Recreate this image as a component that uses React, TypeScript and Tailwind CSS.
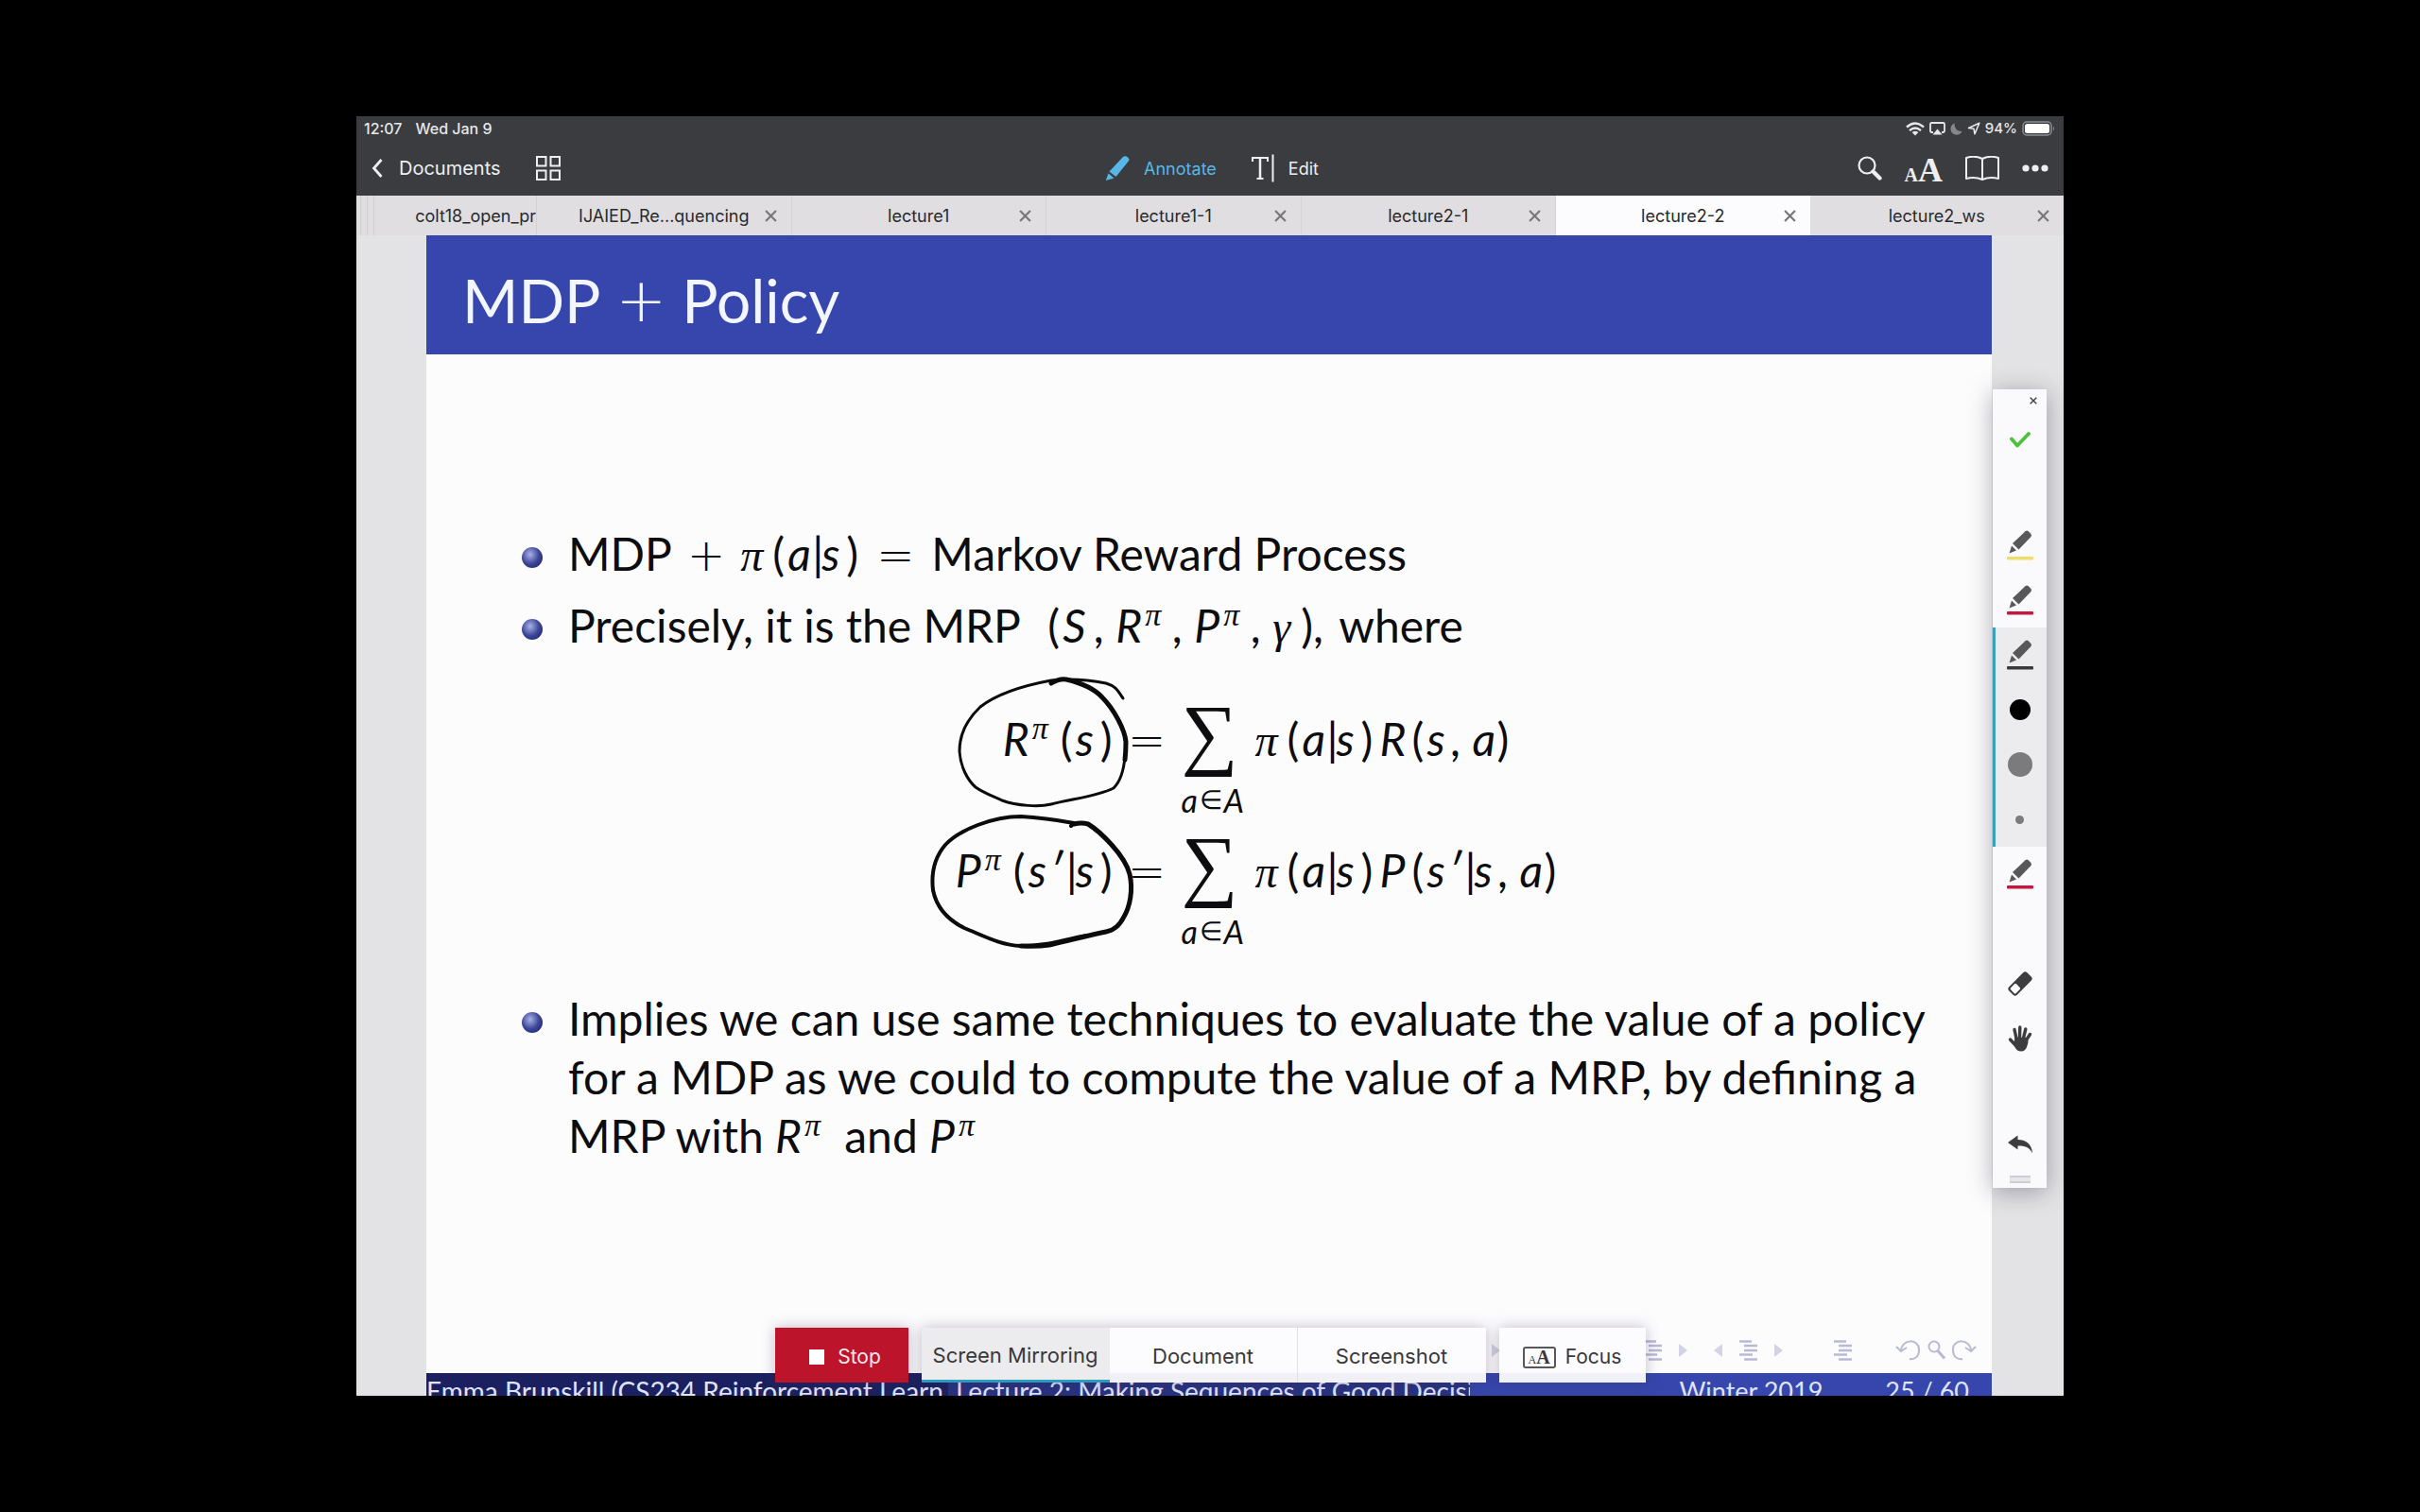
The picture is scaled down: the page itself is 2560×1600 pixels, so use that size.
import React from "react";

type Kids = { children?: React.ReactNode };

const TABS = [
  { name: "IJAIED_Re...quencing", active: false },
  { name: "lecture1", active: false },
  { name: "lecture1-1", active: false },
  { name: "lecture2-1", active: false },
  { name: "lecture2-2", active: true },
  { name: "lecture2_ws", active: false },
];

function Cross({ className }: { className: string }) {
  return (
    <svg viewBox="0 0 12 12" className={className} fill="none" stroke="currentColor" strokeWidth="2" aria-hidden="true">
      <path d="M1 1l10 10M11 1L1 11" />
    </svg>
  );
}

/* ---------- status bar and toolbar ---------- */

function StatusBar() {
  return (
    <div className="flex h-[26px] items-center justify-between pl-2 pr-2 text-[16px] font-medium text-[#e6e7e9]">
      <div className="flex gap-[14px]">
        <span>12:07</span>
        <span>Wed Jan 9</span>
      </div>
      <div className="flex items-center gap-[5px]">
        <svg viewBox="0 0 20 14" className="h-[15px] w-[20px]" aria-label="Wi-Fi" fill="none" stroke="currentColor" strokeWidth="2.400">
          <path d="M1 5Q10-3 19 5M4 8.600Q10 3.200 16 8.600" />
          <path d="M10 14L6.600 10.600Q10 7.800 13.400 10.600Z" fill="currentColor" stroke="none" />
        </svg>
        <svg viewBox="0 0 17 14" className="h-[14px] w-[17px]" fill="none" stroke="currentColor" strokeWidth="1.800" aria-label="AirPlay">
          <path d="M4 11H2.500Q1 11 1 9.500V2.500Q1 1 2.500 1h12Q16 1 16 2.500v7Q16 11 14.500 11H13" />
          <path d="M8.500 7.500L13.500 13.500h-10Z" fill="currentColor" stroke="none" />
        </svg>
        <svg viewBox="0 0 13 13" className="h-[13px] w-[13px] text-[#85878b]" fill="currentColor" aria-label="Do not disturb">
          <path d="M4.500 .5A6.300 6.300 0 1 0 12.500 9Q4.500 9 4.500 .5Z" />
        </svg>
        <svg viewBox="0 0 14 14" className="h-[14px] w-[14px]" fill="none" stroke="currentColor" strokeWidth="1.600" strokeLinejoin="round" aria-label="Location">
          <path d="M12.800 1.200L1.500 6.500L7 7.200L8 12.800Z" />
        </svg>
        <span className="text-[15px]">94%</span>
        <svg viewBox="0 0 36 16" className="h-[16px] w-[36px]" aria-label="Battery">
          <rect x="1" y="1" width="30" height="14" rx="4" fill="none" stroke="#8b8d91" strokeWidth="1.500" />
          <rect x="3" y="3" width="26" height="10" rx="2.500" fill="#fff" />
          <path d="M33 5.500q2 2.500 0 5Z" fill="#8b8d91" />
        </svg>
      </div>
    </div>
  );
}

function Toolbar() {
  return (
    <div className="grid h-[58px] grid-cols-[1fr_auto_1fr] items-center px-4 text-[18px] text-[#eeeff1]">
      <div className="flex items-center gap-[37px]">
        <button className="flex items-center gap-[17px] text-[20px]">
          <svg viewBox="0 0 12 20" className="h-5 w-3" fill="none" stroke="currentColor" strokeWidth="2.800" aria-hidden="true">
            <path d="M10.500 1L2.500 10l8 9" />
          </svg>
          Documents
        </button>
        <button aria-label="Thumbnails">
          <svg viewBox="0 0 26 26" className="h-[26px] w-[26px]" fill="none" stroke="currentColor" strokeWidth="2" aria-hidden="true">
            <path d="M1 1h9.500v9.500H1ZM15.500 1h9.500v9.500h-9.500ZM1 15.500h9.500V25H1ZM15.500 15.500h9.500V25h-9.500Z" />
          </svg>
        </button>
      </div>
      <div className="flex items-center gap-9 pl-1">
        <button className="flex items-center gap-[15px] text-[#58b7e6]">
          <svg viewBox="0 0 26 26" className="h-[26px] w-[26px]" fill="currentColor" aria-hidden="true">
            <path d="M18.500 1.500Q21 -1 24 1.500T24 6.500L11.500 22L4.500 16.500Z" />
            <path d="M3.500 18.500L9.500 23.500L.8 26Z" />
          </svg>
          Annotate
        </button>
        <button className="flex items-center gap-[14px]">
          <svg viewBox="0 0 26 30" className="h-[30px] w-[26px]" fill="none" stroke="currentColor" strokeWidth="2" aria-hidden="true">
            <path d="M2 8V4h16v4M6.500 26h7" />
            <path d="M10 4v22" strokeWidth="2.500" />
            <path d="M23.500 0.500v29" />
          </svg>
          Edit
        </button>
      </div>
      <div className="flex items-center justify-end gap-6">
        <button aria-label="Search">
          <svg viewBox="0 0 26 26" className="h-[26px] w-[26px]" fill="none" stroke="currentColor" aria-hidden="true">
            <circle cx="10" cy="10" r="8.500" strokeWidth="2.200" />
            <path d="M16.500 16.500L23.500 23.500" strokeWidth="4.200" strokeLinecap="round" />
          </svg>
        </button>
        <button aria-label="Text size" className="flex items-baseline pt-1 font-['Liberation_Serif',serif] leading-none">
          <span className="text-[20px] font-bold">A</span>
          <span className="text-[36px] font-bold">A</span>
        </button>
        <button aria-label="Reading view">
          <svg viewBox="0 0 36 26" className="h-[26px] w-[36px]" fill="none" stroke="currentColor" strokeWidth="2" strokeLinejoin="round" aria-hidden="true">
            <path d="M18 3Q10-1 1 2v22q9-2.500 17 1q8-3.500 17-1V2Q26-1 18 3v22" />
          </svg>
        </button>
        <button aria-label="More">
          <svg viewBox="0 0 28 8" className="h-2 w-7" fill="currentColor" aria-hidden="true">
            <circle cx="4" cy="4" r="3.600" />
            <circle cx="14" cy="4" r="3.600" />
            <circle cx="24" cy="4" r="3.600" />
          </svg>
        </button>
      </div>
    </div>
  );
}

function TabStrip() {
  return (
    <nav className="flex h-[42px] bg-[#e0dee1] text-[18px] text-[#2a2a2c]" aria-label="Open documents">
      <div className="flex w-[191px] shrink-0 overflow-hidden border-r border-[#d3d1d5]">
        <span className="ml-1 w-2 border-x border-[#d0ced2]" />
        <span className="mr-[43px] w-2 border-r border-[#d0ced2]" />
        <button className="whitespace-nowrap">colt18_open_pr</button>
      </div>
      {TABS.map((t) => (
        <div
          key={t.name}
          className={
            t.active
              ? "relative flex flex-1 bg-[#fcfbfd]"
              : "relative flex flex-1 border-r border-[#d6d4d8] last:border-r-0"
          }
        >
          <button className="flex-1">{t.name}</button>
          <button className="absolute inset-y-0 right-[15px] text-[#77777a]" aria-label={"Close " + t.name}>
            <Cross className="h-[13px] w-[13px]" />
          </button>
        </div>
      ))}
    </nav>
  );
}

/* ---------- slide ---------- */

function Sign({ children }: Kids) {
  return <span className="font-['DejaVu_Sans',sans-serif] text-[48px] font-extralight leading-none">{children}</span>;
}

function Pi() {
  return <i className="inline-block w-[34px] font-['Liberation_Serif',serif]">π</i>;
}

function SupPi() {
  return (
    <sup className="static inline-block w-[30px] align-[18px] font-['Liberation_Serif',serif] text-[34px] italic leading-none">
      π
    </sup>
  );
}

function Open() {
  return <span className="inline-block w-4">(</span>;
}

function Close() {
  return <span className="inline-block w-5">)</span>;
}

function Var({ children }: Kids) {
  return <i className="inline-block w-[26px]">{children}</i>;
}

function Cap({ children }: Kids) {
  return <i className="inline-block w-[34px]">{children}</i>;
}

/* A capital that carries a π superscript. */
function PolicyCap({ children }: Kids) {
  return (
    <>
      <i className="inline-block w-[31px]">{children}</i>
      <SupPi />
    </>
  );
}

function Bar() {
  return <span className="inline-block w-[10px] text-center">|</span>;
}

function Comma() {
  return <i className="inline-block w-[22px]">,</i>;
}

function Prime() {
  return <i className="-ml-1 inline-block w-[18px]">′</i>;
}

function PolicyTerm() {
  return (
    <>
      <Pi />
      <Open />
      <Var>a</Var>
      <Bar />
      <Var>s</Var>
      <Close />
    </>
  );
}

function Bullet({ children }: Kids) {
  return (
    <li className="flex gap-[27px]">
      <span className="mt-6 h-[22px] w-[22px] shrink-0 rounded-full bg-radial-[at_40%_35%] from-[#a9b2e6] via-[#3c4698] to-[#171c5c]" />
      <span>{children}</span>
    </li>
  );
}

function Sum() {
  return (
    <span className="flex w-[78px] flex-col">
      <span className="h-[79px] font-['Liberation_Serif',serif] text-[84px] leading-[50px]">∑</span>
      <span className="flex whitespace-nowrap text-[34px] leading-[34px]">
        <i className="w-[19px]">a</i>
        <span className="w-[26px] font-['DejaVu_Sans',sans-serif] text-[28px] font-extralight">∈</span>
        <i>A</i>
      </span>
    </span>
  );
}

function EquationRow({ left, right }: { left: React.ReactNode; right: React.ReactNode }) {
  return (
    <div className="grid h-[139px] grid-cols-[1fr_73px_auto_1fr] items-start whitespace-nowrap">
      <span className="justify-self-end">{left}</span>
      <span className="text-center">
        <Sign>=</Sign>
      </span>
      <Sum />
      <span>{right}</span>
    </div>
  );
}

function Ink() {
  return (
    <svg
      viewBox="976 708 230 304"
      className="absolute left-[424px] top-[-43px] h-[304px] w-[230px]"
      fill="none"
      stroke="#0b0b0c"
      strokeLinecap="round"
      strokeLinejoin="round"
      aria-hidden="true"
    >
      <path
        strokeWidth="3"
        d="M1188 739C1182 730 1180 726 1170 723C1150 719 1130 718 1112 720C1085 725 1055 734 1037 748C1020 764 1015 780 1015 795C1016 812 1024 826 1032 833C1042 840 1050 842 1060 847C1076 853 1100 854 1112 851C1135 845 1160 843 1178 834C1186 826 1189 814 1190 800"
      />
      <path strokeWidth="5" d="M1112 723Q1120 718 1128 719C1145 723 1158 729 1166 738C1178 750 1190 772 1191 785Q1191 795 1190 804" />
      <path
        strokeWidth="4"
        d="M1133 874L1136 871C1120 868 1100 865 1080 864C1050 864 1015 878 1000 894C988 908 985 925 987 942C991 962 1004 974 1020 982C1040 990 1058 1000 1080 1001C1110 1001 1125 994 1150 990"
      />
      <path strokeWidth="5" d="M1136 872Q1144 870 1151 872C1164 880 1190 905 1195 925C1199 942 1195 960 1189 970Q1182 984 1170 986C1150 990 1125 997 1110 1000Q1096 1002 1080 1001" />
    </svg>
  );
}

function OutlineMark() {
  return (
    <svg viewBox="0 0 19 22" className="h-[22px] w-[19px]" stroke="currentColor" strokeWidth="2.400" aria-hidden="true">
      <path d="M0 1.500h13M5 6h14M5 11h14M0 15.500h14M5 20.500h14" />
    </svg>
  );
}

function Triangle({ back }: { back?: boolean }) {
  return (
    <svg viewBox="0 0 9 14" className="h-[14px] w-[9px] opacity-60" fill="currentColor" aria-hidden="true">
      <path d={back ? "M9 0v14L0 7Z" : "M0 0v14L9 7Z"} />
    </svg>
  );
}

function SlideNav() {
  return (
    <div className="mt-auto flex h-[48px] items-center justify-end pr-4 text-[#b9b9d6]">
      <span className="mr-[152px]">
        <Triangle />
      </span>
      <span className="mr-[18px]">
        <OutlineMark />
      </span>
      <span className="mr-7">
        <Triangle />
      </span>
      <span className="mr-[18px]">
        <Triangle back />
      </span>
      <span className="mr-[18px]">
        <OutlineMark />
      </span>
      <span className="mr-[54px]">
        <Triangle />
      </span>
      <span className="mr-[46px]">
        <OutlineMark />
      </span>
      <svg viewBox="0 0 86 22" className="h-[22px] w-[86px]" fill="none" stroke="currentColor" strokeWidth="2" aria-hidden="true">
        <path d="M1 7l5 5l6-4M6 12C6-2 26-2 25 11C25 17 21 21 15 20" />
        <circle cx="41" cy="7" r="5.500" />
        <path d="M45 11.500L52 19.500" strokeWidth="3" />
        <path d="M85 7l-5 5l-6-4M80 12C80-2 60-2 61 11C61 17 65 21 71 20" />
      </svg>
    </div>
  );
}

function Slide() {
  return (
    <article className="ml-[74px] mr-[76px] flex flex-1 flex-col bg-[#fcfcfd] font-['Lato','Noto_Sans',sans-serif] text-[#0d0d0f]">
      <h1 className="flex h-[126px] items-center bg-[#3646ac] pl-[38px] pt-3 text-[64px] text-[#f4f6ff]">
        MDP
        <span className="mx-4 font-['DejaVu_Sans',sans-serif] text-[64px] font-extralight">+</span>
        Policy
      </h1>
      <ul className="pl-[101px] pr-[30px] pt-[180px] text-[48px] leading-[62px]">
        <Bullet>
          <span className="mr-4">MDP</span>
          <Sign>+</Sign>
          <span className="ml-4 mr-3">
            <PolicyTerm />
          </span>
          <Sign>=</Sign>
          <span className="ml-[18px]">Markov Reward Process</span>
        </Bullet>
        <li className="h-3" aria-hidden="true" />
        <Bullet>
          <span className="mr-4">Precisely, it is the MRP</span>{" "}
          <Open />
          <Cap>S</Cap>
          <Comma />
          <PolicyCap>R</PolicyCap>
          <Comma />
          <PolicyCap>P</PolicyCap>
          <Comma />
          <i className="inline-block w-[30px] font-['Liberation_Serif',serif]">γ</i>
          <span>)</span>, <span className="ml-1">where</span>
        </Bullet>
      </ul>
      <div className="relative ml-[101px] mr-[79px] mt-[56px] pr-[76px] text-[48px] leading-[62px]">
        <EquationRow
          left={
            <>
              <PolicyCap>R</PolicyCap>
              <Open />
              <Var>s</Var>
              <span>)</span>
            </>
          }
          right={
            <>
              <PolicyTerm />
              <Cap>R</Cap>
              <Open />
              <Var>s</Var>
              <Comma />
              <Var>a</Var>
              <Close />
            </>
          }
        />
        <EquationRow
          left={
            <>
              <PolicyCap>P</PolicyCap>
              <Open />
              <Var>s</Var>
              <Prime />
              <Bar />
              <Var>s</Var>
              <span>)</span>
            </>
          }
          right={
            <>
              <PolicyTerm />
              <Cap>P</Cap>
              <Open />
              <Var>s</Var>
              <Prime />
              <Bar />
              <Var>s</Var>
              <Comma />
              <Var>a</Var>
              <Close />
            </>
          }
        />
        <Ink />
      </div>
      <ul className="pl-[101px] pr-[30px] pt-[18px] text-[48px] leading-[62px]">
        <Bullet>
          Implies we can use same techniques to evaluate the value of a policy for a MDP as we could to compute the value of
          a MRP, by defining a MRP with <PolicyCap>R</PolicyCap> and <PolicyCap>P</PolicyCap>
        </Bullet>
      </ul>
      <SlideNav />
      <footer className="grid h-6 grid-cols-3 overflow-hidden whitespace-nowrap text-[28px] leading-[38px] text-[#dfe3fb]">
        <span className="overflow-hidden bg-[#1b2160]">Emma Brunskill (CS234 Reinforcement Learn</span>
        <span className="overflow-hidden bg-[#28327f] pl-2">Lecture 2: Making Sequences of Good Decisions</span>
        <span className="flex justify-end gap-[66px] bg-[#3646ac] pr-6 text-[27px]">
          <span>Winter 2019</span>
          <span>25 / 60</span>
        </span>
      </footer>
    </article>
  );
}

/* ---------- floating controls ---------- */

function Tool({ label, children }: { label: string; children?: React.ReactNode }) {
  return (
    <button className="flex h-[58px] w-full items-center justify-center" aria-label={label}>
      {children}
    </button>
  );
}

function Pen({ line }: { line: string }) {
  return (
    <svg viewBox="0 0 30 32" className="h-8 w-[30px]" aria-hidden="true">
      <path fill="#58585b" d="M20.500 1.200Q22 0 23.500 1L26.500 4Q27.500 5.500 26.500 7L13.500 20.500L7 14Z" />
      <path fill="#58585b" d="M6 16.500L11 21.500L3.500 24.500Z" />
      <rect x="1" y="28" width="28" height="3.500" rx="1" fill={line} />
    </svg>
  );
}

function Palette() {
  return (
    <aside className="absolute right-[18px] top-[289px] flex w-[57px] flex-col bg-[#faf9fc] text-[#3d3d40] shadow-[0_4px_26px_rgba(30,25,50,0.35)]">
      <button className="flex h-5 items-end justify-end pr-[10px]" aria-label="Close palette">
        <Cross className="mb-1 h-2 w-2" />
      </button>
      <Tool label="Done">
        <svg viewBox="0 0 22 17" className="mt-2 h-[17px] w-[22px]" fill="none" stroke="#4cc23c" strokeWidth="3.800" strokeLinecap="round" strokeLinejoin="round">
          <path d="M2 7.500l6 7L20 2" />
        </svg>
      </Tool>
      <div className="h-[58px]" />
      <Tool label="Yellow highlighter">
        <Pen line="#f0dc6a" />
      </Tool>
      <Tool label="Red pen">
        <Pen line="#c5173f" />
      </Tool>
      <div className="border-l-[3px] border-[#3d9fc0] bg-[#ecebed] pr-[3px]">
        <Tool label="Black pen">
          <Pen line="#3a3a3c" />
        </Tool>
        <Tool label="Black">
          <span className="h-[22px] w-[22px] rounded-full bg-black" />
        </Tool>
        <Tool label="Opacity">
          <span className="h-[26px] w-[26px] rounded-full bg-[#7b7a7c]" />
        </Tool>
        <Tool label="Thickness">
          <span className="h-[9px] w-[9px] rounded-full bg-[#7b7a7c]" />
        </Tool>
      </div>
      <Tool label="Red marker">
        <Pen line="#c5173f" />
      </Tool>
      <div className="h-[58px]" />
      <Tool label="Eraser">
        <svg viewBox="0 0 28 28" className="h-7 w-7">
          <g transform="rotate(-45 14 14)">
            <rect x="0.500" y="8" width="27" height="12" rx="3" fill="#3d3d40" />
            <rect x="2.500" y="10" width="8.500" height="8" rx="1.500" fill="#fff" />
          </g>
        </svg>
      </Tool>
      <Tool label="Pan">
        <svg viewBox="0 0 26 28" className="h-7 w-[26px]" fill="none" stroke="currentColor" strokeLinecap="round">
          <path strokeWidth="3.400" d="M9 14L7 4.500M12.500 13L12.800 2M16.500 13.500L18.800 4M18.500 17L23.500 9.500" />
          <path strokeWidth="3.400" d="M9 22L2.500 15" />
          <path fill="currentColor" stroke="none" d="M7.400 12.500L20.500 13Q22.500 16 20.500 21.500Q19 27.500 14 27.500Q9.500 27.500 7.500 23Q6 18 7.400 12.500Z" />
        </svg>
      </Tool>
      <div className="h-[58px]" />
      <Tool label="Undo">
        <svg viewBox="0 0 28 20" className="mb-2 h-5 w-7" fill="currentColor">
          <path d="M1 8L11.500 0.500V5C20 5 26.500 9.500 27 19.500C24 13 19 11.500 11.500 11.500V15.500Z" />
        </svg>
      </Tool>
      <div className="mx-auto h-[13px] w-[22px]">
        <div className="h-2 border-y-2 border-[#cfced2] bg-[#e6e5e9]" />
      </div>
    </aside>
  );
}

function PresenterBar() {
  return (
    <div className="absolute inset-x-0 bottom-[14px] flex h-[58px] justify-center gap-[14px] text-[22px] text-[#38383b]">
      <button className="flex w-[141px] items-center justify-center gap-[14px] bg-[#bb142b] pl-2 pt-1 text-[21px] text-[#ffe9ee] shadow-[0_0_14px_rgba(60,40,80,0.3)]">
        <span className="h-4 w-4 bg-white" />
        Stop
      </button>
      <div className="flex shadow-[0_0_14px_rgba(60,40,80,0.3)]">
        <button className="w-[199px] border-b-[3px] border-[#2a9dbd] bg-[#ecebee] pt-1">Screen Mirroring</button>
        <button className="w-[199px] border-r border-[#e2e0e5] bg-[#fcfbfd]/95 pt-0.5">Document</button>
        <button className="w-[199px] bg-[#fcfbfd]/95 pt-0.5">Screenshot</button>
      </div>
      <button className="flex w-[155px] items-center justify-center gap-[10px] bg-[#fcfbfd]/95 pt-1 text-[21px] shadow-[0_0_14px_rgba(60,40,80,0.3)]">
        <span className="flex h-[23px] w-[35px] items-baseline justify-center rounded-[3px] border-2 border-[#58585b] font-['Liberation_Serif',serif] leading-[19px]">
          <span className="text-[12px]">A</span>
          <span className="text-[20px] font-bold">A</span>
        </span>
        Focus
      </button>
    </div>
  );
}

export default function App() {
  return (
    <main className="flex min-h-screen bg-black px-[377px] py-[123px] font-['Inter',sans-serif]">
      <div className="relative flex flex-1 flex-col overflow-hidden bg-[#e3e2e4]">
        <header className="bg-[#3a3c40]">
          <StatusBar />
          <Toolbar />
        </header>
        <TabStrip />
        <Slide />
        <Palette />
        <PresenterBar />
      </div>
    </main>
  );
}
